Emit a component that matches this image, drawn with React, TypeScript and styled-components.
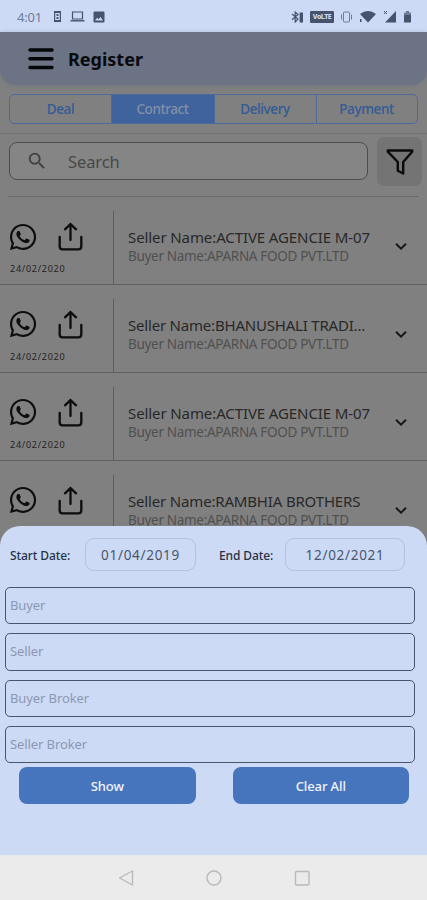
import React from 'react';
import styled, { createGlobalStyle } from 'styled-components';
import { FaWhatsapp } from 'react-icons/fa';
import { MdSearch } from 'react-icons/md';

const GlobalStyle = createGlobalStyle`
  * { box-sizing: border-box; }
  body { margin: 0; font-family: "Noto Sans", sans-serif; background: #808080; }
  button, input { font-family: inherit; }
`;

const Phone = styled.div`
  position: relative;
  display: flex;
  flex-direction: column;
  width: 427px;
  height: 900px;
  overflow: hidden;
  background: #808080;
`;

const StatusBar = styled.div`
  display: flex;
  align-items: center;
  justify-content: space-between;
  flex: none;
  height: 32px;
  padding: 1px 15px 0 17px;
  background: #cddaf5;
  color: #46536a;
`;

const StatusGroup = styled.div<{ $gap: number }>`
  display: flex;
  align-items: center;
  gap: ${(p) => p.$gap}px;
  svg { display: block; }
`;

const Clock = styled.span`
  width: 26px;
  margin-right: 2px;
  font-size: 13px;
  line-height: 16px;
  letter-spacing: -0.2px;
  color: #6f7c94;
`;

const NetworkBadge = styled.span`
  width: 24px;
  height: 12px;
  border-radius: 1px;
  background: #46536a;
  color: #cddaf5;
  font-size: 7px;
  font-weight: 800;
  line-height: 12px;
  text-align: center;
  letter-spacing: -0.5px;
`;

const Header = styled.header`
  display: flex;
  align-items: center;
  flex: none;
  gap: 14px;
  height: 53px;
  padding: 0 0 0 28px;
  border-radius: 0 0 16px 16px;
  background: #6b7384;
  box-shadow: 0 1px 4px rgba(96, 104, 120, 0.4);
  svg { display: block; }
`;

const Title = styled.h1`
  margin: 0;
  font-size: 18px;
  line-height: 24px;
  font-weight: 700;
  letter-spacing: 0;
  color: #080a0d;
`;

const TabArea = styled.div`
  flex: none;
  height: 49px;
  padding: 9px 9px 0 9px;
  border-bottom: 1px solid #727272;
`;

const Tabs = styled.div`
  display: grid;
  grid-template-columns: 101px 103px 102px 1fr;
  height: 30px;
  border: 1px solid #4c6a9a;
  border-radius: 5px;
  overflow: hidden;
`;

const Tab = styled.button<{ $active?: boolean }>`
  padding: 0 1px 0 0;
  border: 0;
  border-left: 1px solid #4c6a9a;
  background: ${(p) => (p.$active ? '#3f639c' : 'transparent')};
  color: ${(p) => (p.$active ? '#8390a6' : '#315a99')};
  font-size: 13.5px;
  line-height: 27px;
  font-weight: 500;
  letter-spacing: -0.4px;
  &:first-child { border-left: 0; padding: 0; }
`;

const SearchArea = styled.div`
  display: flex;
  flex: none;
  gap: 9px;
  height: 62px;
  margin: 0 5px 0 9px;
  padding-top: 3px;
`;

const SearchBox = styled.label`
  display: flex;
  align-items: center;
  width: 359px;
  height: 38px;
  margin-top: 5px;
  padding-left: 16px;
  gap: 20px;
  border: 1px solid #4d4d4d;
  border-radius: 8px;
  background: #858585;
  color: #414141;
`;

const SearchInput = styled.input`
  width: 240px;
  padding: 0;
  border: 0;
  outline: 0;
  background: transparent;
  font-size: 16.5px;
  letter-spacing: -0.1px;
  &::placeholder { color: #484848; opacity: 1; }
`;

const FilterButton = styled.button`
  display: grid;
  place-items: center;
  width: 45px;
  height: 49px;
  padding: 0;
  border: 0;
  border-radius: 7px;
  background: #747474;
`;

const List = styled.main`
  flex: 1;
  min-height: 0;
  overflow: hidden;
  &::before {
    content: "";
    display: block;
    height: 1px;
    margin: 0 8px;
    background: #6c6c6c;
  }
`;

const Row = styled.article`
  display: flex;
  height: 87.9px;
  border-bottom: 1px solid #606060;
`;

const Actions = styled.div`
  width: 114px;
  flex: none;
  margin-top: 14px;
  padding: 11px 0 0 8px;
  border-right: 1px solid #5e5e5e;
`;

const ActionIcons = styled.div`
  display: flex;
  align-items: center;
  gap: 20px;
  height: 29px;
  color: #0d0d0d;
  svg { display: block; flex: none; }
`;

const RowDate = styled.time`
  display: block;
  margin: 11px 0 0 2px;
  font-size: 9px;
  line-height: 13px;
  letter-spacing: 0.75px;
  color: #222;
`;

const Names = styled.div`
  width: 268px;
  padding: 30px 0 0 14px;
  white-space: nowrap;
`;

const SellerName = styled.div<{ $spacing: number }>`
  font-size: 15px;
  line-height: 20px;
  letter-spacing: ${(p) => p.$spacing}px;
  color: #282828;
`;

const BuyerName = styled.div`
  font-size: 13.5px;
  line-height: 19px;
  letter-spacing: -0.31px;
  color: #505050;
`;

const Expand = styled.span`
  display: block;
  margin: 45px 0 0 13px;
  svg { display: block; }
`;

const Sheet = styled.section`
  position: absolute;
  left: 0;
  right: 0;
  top: 526px;
  height: 329px;
  border-radius: 20px 20px 0 0;
  background: #cddaf5;
`;

const DateBar = styled.div`
  display: flex;
  align-items: center;
  height: 61px;
  padding: 0 0 4px 10px;
`;

const DateLabel = styled.span<{ $width: number }>`
  width: ${(p) => p.$width}px;
  padding-top: 1px;
  font-size: 12px;
  font-weight: 500;
  letter-spacing: -0.1px;
  color: #263246;
  white-space: nowrap;
`;

const DateField = styled.button<{ $width: number; $after?: number }>`
  width: ${(p) => p.$width}px;
  height: 33px;
  margin-right: ${(p) => p.$after || 0}px;
  padding: 0;
  border: 1px solid #b6c1d5;
  border-radius: 9px;
  background: transparent;
  font-size: 13.5px;
  letter-spacing: 0.7px;
  color: #49566d;
`;

const Fields = styled.div`
  display: grid;
  gap: 9px;
  padding: 0 12px 0 5px;
`;

const Field = styled.input`
  width: 100%;
  height: 37.3px;
  padding: 0 0 1px 4px;
  border: 1px solid #49556a;
  border-radius: 5px;
  outline: 0;
  background: transparent;
  font-size: 13px;
  letter-spacing: -0.1px;
  &::placeholder { color: #8b98b3; opacity: 1; }
`;

const Buttons = styled.div`
  display: flex;
  justify-content: space-between;
  padding: 4px 18px 0 19px;
`;

const ActionButton = styled.button`
  width: 176.5px;
  height: 37px;
  padding: 0;
  border: 0;
  border-radius: 8px;
  background: #4775bd;
  color: #f0f5ff;
  font-size: 13px;
  font-weight: 500;
  letter-spacing: -0.1px;
`;

const NavBar = styled.nav`
  position: absolute;
  left: 0;
  right: 0;
  bottom: 0;
  display: flex;
  align-items: center;
  gap: 72px;
  height: 45px;
  padding: 1px 0 0 118px;
  background: #ebebeb;
  svg { display: block; }
`;

const BatteryPhoneIcon = () => (
  <svg width="9" height="13" viewBox="0 0 9 13">
    <path fill="currentColor" fillRule="evenodd" d="M1 1h7v11H1zM2.2 3v7h4.6V3z" />
    <path fill="currentColor" d="M3.5 4h2v2h-2zM3.5 7h2v2h-2z" />
  </svg>
);

const LaptopIcon = () => (
  <svg width="15" height="13" viewBox="0 0 15 13" fill="none" stroke="currentColor">
    <path strokeWidth="1.2" d="M2.5 9V2h10v7z" />
    <path strokeWidth="1.4" d="M0.5 10.8h14" />
  </svg>
);

const PictureIcon = () => (
  <svg width="12" height="12" viewBox="0 0 12 12">
    <path fill="currentColor" fillRule="evenodd" d="M1.5.5h9q1 0 1 1v9q0 1-1 1h-9q-1 0-1-1v-9q0-1 1-1zM2 9.5h8L7.5 6 5.5 8.2 4.2 6.8z" />
  </svg>
);

const BluetoothIcon = () => (
  <svg width="13" height="12" viewBox="0 0 13 12" fill="none" stroke="currentColor">
    <path strokeWidth="1.2" d="M1 3l6 5-2.8 3V1L7 3.5 1 8.8" />
    <path strokeWidth="3.4" d="M10.3 1.5v10" />
  </svg>
);

const VibrateIcon = () => (
  <svg width="13" height="12" viewBox="0 0 13 12" fill="none" stroke="#6f7c94">
    <rect x="3.5" y="1" width="6" height="10" rx="1" />
    <path d="M1.5 3.5v5M11.5 3.5v5" />
  </svg>
);

const WifiIcon = () => (
  <svg width="18" height="13" viewBox="0 0 18 13">
    <path fill="currentColor" d="M1 4q8-6 16 0L9 12.5zM1 9h1.5v3H1z" />
  </svg>
);

const SignalIcon = () => (
  <svg width="14" height="13" viewBox="0 0 14 13">
    <path fill="currentColor" d="M13 1v11.5H2z" />
    <path fill="none" stroke="currentColor" d="M1 1l3 3M4 1L1 4" />
  </svg>
);

const BatteryIcon = () => (
  <svg width="9" height="13" viewBox="0 0 9 13">
    <path fill="#6f7c94" d="M3 1h3v1.5h2V6H1V2.5h2z" />
    <path fill="currentColor" d="M1 5h7v7.5H1z" />
  </svg>
);

const MenuIcon = () => (
  <svg width="26" height="22" viewBox="0 0 26 22" stroke="#050608" strokeWidth="3.4" strokeLinecap="round">
    <path d="M2 2h22M2 10.8h22M2 19.5h22" />
  </svg>
);

const FilterIcon = () => (
  <svg width="28" height="28" viewBox="0 0 28 28" fill="none" stroke="#0b0b0b" strokeWidth="2.4" strokeLinejoin="round">
    <path d="M1.8 2.5h24.4v1.2L17.2 14v11.5l-5.4-2.7V14L1.8 3.7z" />
  </svg>
);

const ShareIcon = () => (
  <svg width="25" height="29" viewBox="0 0 25 29" fill="none" stroke="currentColor" strokeWidth="2.3" strokeLinecap="round" strokeLinejoin="round">
    <path d="M1.7 15v9.5q0 2.8 2.8 2.8h16q2.8 0 2.8-2.8V15M12.5 18V2M7 7.3L12.5 2 18 7.3" />
  </svg>
);

const ChevronIcon = () => (
  <svg width="12" height="9" viewBox="0 0 12 9" fill="none" stroke="#151515" strokeWidth="1.9">
    <path d="M1 1.8l5 4.8 5-4.8" />
  </svg>
);

const contracts = [
  { seller: 'ACTIVE AGENCIE M-07', spacing: -0.1 },
  { seller: 'BHANUSHALI TRADI...', spacing: -0.2 },
  { seller: 'ACTIVE AGENCIE M-07', spacing: -0.1 },
  { seller: 'RAMBHIA BROTHERS', spacing: -0.17 },
];

export default function App() {
  return (
    <Phone>
      <GlobalStyle />
      <StatusBar>
        <StatusGroup $gap={8}>
          <Clock>4:01</Clock>
          <BatteryPhoneIcon />
          <LaptopIcon />
          <PictureIcon />
        </StatusGroup>
        <StatusGroup $gap={6}>
          <BluetoothIcon />
          <NetworkBadge>VoLTE</NetworkBadge>
          <VibrateIcon />
          <WifiIcon />
          <SignalIcon />
          <BatteryIcon />
        </StatusGroup>
      </StatusBar>
      <Header>
        <MenuIcon />
        <Title>Register</Title>
      </Header>
      <TabArea>
        <Tabs>
          <Tab>Deal</Tab>
          <Tab $active>Contract</Tab>
          <Tab>Delivery</Tab>
          <Tab>Payment</Tab>
        </Tabs>
      </TabArea>
      <SearchArea>
        <SearchBox>
          <MdSearch size={22} />
          <SearchInput placeholder="Search" />
        </SearchBox>
        <FilterButton aria-label="Filter"><FilterIcon /></FilterButton>
      </SearchArea>
      <List>
        {contracts.map((c, i) => (
          <Row key={i}>
            <Actions>
              <ActionIcons>
                <FaWhatsapp size={30} />
                <ShareIcon />
              </ActionIcons>
              <RowDate>24/02/2020</RowDate>
            </Actions>
            <Names>
              <SellerName $spacing={c.spacing}>Seller Name:{c.seller}</SellerName>
              <BuyerName>Buyer Name:APARNA FOOD PVT.LTD</BuyerName>
            </Names>
            <Expand><ChevronIcon /></Expand>
          </Row>
        ))}
      </List>
      <Sheet>
        <DateBar>
          <DateLabel $width={75}>Start Date:</DateLabel>
          <DateField $width={111} $after={23}>01/04/2019</DateField>
          <DateLabel $width={66}>End Date:</DateLabel>
          <DateField $width={120}>12/02/2021</DateField>
        </DateBar>
        <Fields>
          <Field placeholder="Buyer" />
          <Field placeholder="Seller" />
          <Field placeholder="Buyer Broker" />
          <Field placeholder="Seller Broker" />
        </Fields>
        <Buttons>
          <ActionButton>Show</ActionButton>
          <ActionButton>Clear All</ActionButton>
        </Buttons>
      </Sheet>
      <NavBar>
        <svg width="16" height="16" viewBox="0 0 16 16" fill="none" stroke="#b9b9b9" strokeWidth="1.4" strokeLinejoin="round"><path d="M14.5 1v14L1.5 8z" /></svg>
        <svg width="16" height="16" viewBox="0 0 16 16" fill="none" stroke="#b9b9b9" strokeWidth="1.4"><circle cx="8" cy="8" r="7" /></svg>
        <svg width="16" height="16" viewBox="0 0 16 16" fill="none" stroke="#b9b9b9" strokeWidth="1.4"><rect x="1.5" y="1.5" width="13.5" height="13.5" rx="1" /></svg>
      </NavBar>
    </Phone>
  );
}
